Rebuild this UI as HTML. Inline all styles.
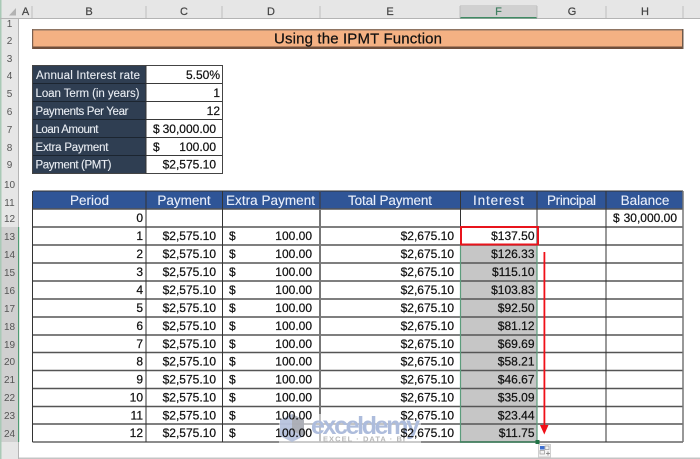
<!DOCTYPE html>
<html><head><meta charset="utf-8"><style>
html,body{margin:0;padding:0;background:#fff;width:700px;height:459px;overflow:hidden}
svg{display:block}
text{font-family:"Liberation Sans",sans-serif;font-size:12px;fill:#111;stroke:#111;stroke-width:.22px}
.h text{font-size:10px;fill:#555;stroke:none;text-anchor:middle}
.c text{font-size:11px;fill:#444;stroke:#444;stroke-width:.2px;text-anchor:middle}
.th text{font-size:13.5px;fill:#e8eefa;stroke:#e8eefa;stroke-width:.12px;text-anchor:middle}
.l text{fill:#e8ecf2;stroke:#e8ecf2;stroke-width:.12px;font-size:11.5px}
.r text{text-anchor:end}
.w text{stroke:none}
</style></head><body>
<svg width="700" height="459" viewBox="0 0 700 459" xmlns="http://www.w3.org/2000/svg">
<!-- sheet chrome -->
<rect x="0" y="0" width="700" height="18" fill="#e6e6e6"/>
<rect x="0" y="0" width="19" height="459" fill="#e6e6e6"/>
<rect x="0" y="0" width="1.5" height="459" fill="#a9c9b6"/>
<rect x="1.5" y="227" width="16.5" height="215" fill="#d0d0d0"/>
<rect x="460" y="5" width="77" height="13" fill="#d0d0d0"/>
<rect x="0" y="18" width="700" height="1" fill="#b4b4b4"/>
<rect x="18" y="18" width="1" height="441" fill="#b4b4b4"/>
<rect x="18" y="227" width="1.2" height="215" fill="#4f9a72"/>
<rect x="460" y="17" width="77" height="1.4" fill="#3f8a63"/>
<path d="M9 15.5L16 15.5L16 8Z" fill="#b2b2b2"/>
<path d="M32 6V18M146 6V18M222 6V18M320 6V18M460 6V18M537 6V18M606 6V18M683 6V18" stroke="#bdbdbd" stroke-width="1"/>
<g class="c">
<text x="25.500" y="15">A</text><text x="89" y="15">B</text><text x="184" y="15">C</text><text x="271" y="15">D</text><text x="390" y="15">E</text><text x="498.500" y="15" style="fill:#3f7f60;stroke:#3f7f60">F</text><text x="572" y="15">G</text><text x="645" y="15">H</text>
</g>
<g class="h">
<text x="9.500" y="27">1</text><text x="9.500" y="44">2</text><text x="9.500" y="62">3</text><text x="9.500" y="79">4</text><text x="9.500" y="97">5</text><text x="9.500" y="115">6</text><text x="9.500" y="133">7</text><text x="9.500" y="151">8</text><text x="9.500" y="168">9</text><text x="9.500" y="188">10</text><text x="9.500" y="206">11</text><text x="9.500" y="222">12</text>
<g style="fill:#3f7f60"><text x="9.500" y="240">13</text><text x="9.500" y="258">14</text><text x="9.500" y="276">15</text><text x="9.500" y="294">16</text><text x="9.500" y="312">17</text><text x="9.500" y="330">18</text><text x="9.500" y="348">19</text><text x="9.500" y="365">20</text><text x="9.500" y="383">21</text><text x="9.500" y="401">22</text><text x="9.500" y="419">23</text><text x="9.500" y="437">24</text></g>
</g>
<rect x="19" y="457.500" width="681" height="1.500" fill="#c4c4c4"/>

<!-- title -->
<rect x="32" y="29" width="651" height="20" fill="#f4b183"/>
<rect x="32" y="29" width="651" height="1.500" fill="#8f7563"/>
<rect x="32" y="46.500" width="651" height="2.500" fill="#6f4f3c"/>
<rect x="32" y="29" width="1.200" height="20" fill="#7a6050"/>
<rect x="682" y="29" width="1.500" height="20" fill="#6f5a4b"/>
<text x="274" y="43.500" textLength="168" lengthAdjust="spacing" style="font-size:15px">Using the IPMT Function</text>

<!-- top info table -->
<rect x="33" y="65.500" width="113" height="108" fill="#2f3e52"/>
<path d="M33 83.500H222M33 101.500H222M33 119.500H222M33 137.500H222M33 155.500H222" stroke="#3a3a3a" stroke-width="1"/>
<path d="M33 83.500H146M33 101.500H146M33 119.500H146M33 137.500H146M33 155.500H146" stroke="#1c2530" stroke-width="1"/>
<rect x="32.500" y="65.500" width="190" height="108" fill="none" stroke="#444" stroke-width="1"/>
<path d="M146 65.500V173.500" stroke="#333" stroke-width="1"/>
<g class="l">
<text x="36" y="79" textLength="104" lengthAdjust="spacing">Annual Interest rate</text>
<text x="35.500" y="97" textLength="104" lengthAdjust="spacing">Loan Term (in years)</text>
<text x="35.500" y="115" textLength="93" lengthAdjust="spacing">Payments Per Year</text>
<text x="35.500" y="133" textLength="63" lengthAdjust="spacing">Loan Amount</text>
<text x="35.500" y="151" textLength="73" lengthAdjust="spacing">Extra Payment</text>
<text x="35.500" y="168.500" textLength="76" lengthAdjust="spacing">Payment (PMT)</text>
</g>
<g class="r">
<text x="220" y="79">5.50%</text><text x="220" y="97">1</text><text x="220" y="115">12</text>
<text x="216" y="133">30,000.00</text><text x="216" y="151">100.00</text><text x="216" y="168.500">$2,575.10</text>
</g>
<text x="153" y="133">$</text><text x="153" y="151">$</text>

<!-- main table fills -->
<rect x="33" y="191" width="650" height="18" fill="#2f5597"/>
<rect x="461" y="245" width="75.500" height="197" fill="#c6c6c6"/>
<!-- row lines -->
<path d="M33 209H683M33 227H683M33 245H683M33 263H683M33 281H683M33 299H683M33 317H683M33 335H683M33 352.500H683M33 370.500H683M33 388.500H683M33 406.500H683M33 424H683" stroke="#555" stroke-width="1.400"/>
<path d="M32.500 442H683" stroke="#666" stroke-width="1.600"/>
<path d="M33 191H683" stroke="#333" stroke-width="1"/>
<path d="M32.500 191V442M146 191V442M222.500 191V442M460.500 191V442M537 191V442M606 191V442" stroke="#333" stroke-width="1"/>
<path d="M320 191V442" stroke="#777" stroke-width="2"/>
<path d="M683 191V442" stroke="#777" stroke-width="1.500"/>
<path d="M320 191V209" stroke="#22375e" stroke-width="1.500"/>

<g class="th">
<text x="89.500" y="205">Period</text><text x="184" y="205">Payment</text>
<text x="270.500" y="205" textLength="89" lengthAdjust="spacing">Extra Payment</text>
<text x="390" y="205" textLength="84" lengthAdjust="spacing">Total Payment</text>
<text x="498.500" y="205" textLength="51" lengthAdjust="spacing">Interest</text>
<text x="571.500" y="205" textLength="49" lengthAdjust="spacing">Principal</text>
<text x="645" y="205">Balance</text>
</g>

<!-- watermark beneath text -->
<g class="w">
<rect x="279" y="414" width="142" height="29" fill="#fff" fill-opacity=".55"/>
<path d="M292 414L304 420V436L292 442L280 436V420Z" fill="#b4c0dc" fill-opacity=".9"/>
<path d="M292 414L304 420V436L292 431Z" fill="#a6a6a6" fill-opacity=".7"/>
<text x="311" y="434" style="font-size:25px;font-weight:bold;fill:#adbcdc" textLength="109" lengthAdjust="spacing">exceldemy</text>
<text x="323" y="441.500" style="font-size:7.500px;fill:#b8b8b8;font-weight:bold" textLength="82" lengthAdjust="spacing">EXCEL · DATA · BI</text>
</g>

<g class="r">
<!-- period -->
<text x="143" y="222">0</text><text x="143" y="240">1</text><text x="143" y="258">2</text><text x="143" y="276">3</text><text x="143" y="294">4</text><text x="143" y="312">5</text><text x="143" y="330">6</text><text x="143" y="348">7</text><text x="143" y="365.500">8</text><text x="143" y="383.500">9</text><text x="143" y="401.500">10</text><text x="143" y="419.500">11</text><text x="143" y="437">12</text>
<!-- payment -->
<text x="216" y="240">$2,575.10</text><text x="216" y="258">$2,575.10</text><text x="216" y="276">$2,575.10</text><text x="216" y="294">$2,575.10</text><text x="216" y="312">$2,575.10</text><text x="216" y="330">$2,575.10</text><text x="216" y="348">$2,575.10</text><text x="216" y="365.500">$2,575.10</text><text x="216" y="383.500">$2,575.10</text><text x="216" y="401.500">$2,575.10</text><text x="216" y="419.500">$2,575.10</text><text x="216" y="437">$2,575.10</text>
<!-- extra -->
<text x="312" y="240">100.00</text><text x="312" y="258">100.00</text><text x="312" y="276">100.00</text><text x="312" y="294">100.00</text><text x="312" y="312">100.00</text><text x="312" y="330">100.00</text><text x="312" y="348">100.00</text><text x="312" y="365.500">100.00</text><text x="312" y="383.500">100.00</text><text x="312" y="401.500">100.00</text><text x="312" y="419.500">100.00</text><text x="312" y="437">100.00</text>
<!-- total -->
<text x="454" y="240">$2,675.10</text><text x="454" y="258">$2,675.10</text><text x="454" y="276">$2,675.10</text><text x="454" y="294">$2,675.10</text><text x="454" y="312">$2,675.10</text><text x="454" y="330">$2,675.10</text><text x="454" y="348">$2,675.10</text><text x="454" y="365.500">$2,675.10</text><text x="454" y="383.500">$2,675.10</text><text x="454" y="401.500">$2,675.10</text><text x="454" y="419.500">$2,675.10</text><text x="454" y="437">$2,675.10</text>
<!-- interest -->
<text x="534.500" y="240">$137.50</text><text x="534.500" y="258">$126.33</text><text x="534.500" y="276">$115.10</text><text x="534.500" y="294">$103.83</text><text x="534.500" y="312">$92.50</text><text x="534.500" y="330">$81.12</text><text x="534.500" y="348">$69.69</text><text x="534.500" y="365.500">$58.21</text><text x="534.500" y="383.500">$46.67</text><text x="534.500" y="401.500">$35.09</text><text x="534.500" y="419.500">$23.44</text><text x="534.500" y="437">$11.75</text>
<text x="677" y="222">30,000.00</text>
</g>
<text x="613" y="222">$</text>
<g>
<text x="229" y="240">$</text><text x="229" y="258">$</text><text x="229" y="276">$</text><text x="229" y="294">$</text><text x="229" y="312">$</text><text x="229" y="330">$</text><text x="229" y="348">$</text><text x="229" y="365.500">$</text><text x="229" y="383.500">$</text><text x="229" y="401.500">$</text><text x="229" y="419.500">$</text><text x="229" y="437">$</text>
</g>

<!-- selection -->
<path d="M460.500 245V442H537V245" fill="none" stroke="#5c9c7c" stroke-width="1.200"/>
<path d="M460 442H537" stroke="#2f7a52" stroke-width="1.200"/>
<rect x="461" y="227" width="77" height="17.500" fill="none" stroke="#e8141c" stroke-width="2"/>
<rect x="535.500" y="440" width="4" height="4" fill="#217346"/>
<!-- arrow -->
<rect x="543.500" y="252" width="1.800" height="175" fill="#f01018"/>
<path d="M540 425H548.500L544.300 434.500Z" fill="#f01018"/>
<!-- paste options -->
<rect x="538.500" y="444.500" width="12" height="12.500" fill="#f4f4f4" stroke="#cfcfcf"/>
<rect x="540" y="446" width="4.500" height="3.500" fill="#3f6fd0"/>
<rect x="545" y="446" width="4" height="3.500" fill="none" stroke="#999" stroke-width=".7"/>
<rect x="540" y="450.500" width="4.500" height="3.500" fill="none" stroke="#999" stroke-width=".7"/>
<path d="M546 453.500H550M548 451.500V455.500" stroke="#777" stroke-width=".8"/>
</svg>
</body></html>
